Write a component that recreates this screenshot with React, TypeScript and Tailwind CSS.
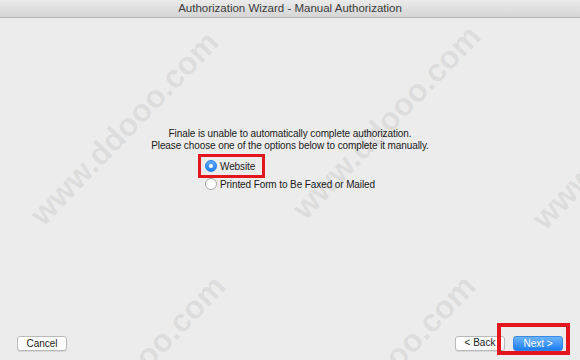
const marks = [
  { pos: "left-[124px] top-[128px]" },
  { pos: "left-[386px] top-[122px]" },
  { pos: "left-[626px] top-[132px]" },
  { pos: "left-[131px] top-[372px]" },
  { pos: "left-[381px] top-[372px]" },
];

const Radio = ({ checked }: { checked?: boolean }) =>
  checked ? (
    <span className="w-[12px] h-[12px] rounded-full bg-gradient-to-b from-[#5fadf8] to-[#1b7ef0] border border-[#2a7ee6] flex items-center justify-center">
      <span className="w-[4px] h-[4px] rounded-full bg-white" />
    </span>
  ) : (
    <span className="w-[12px] h-[12px] rounded-full bg-white border border-[#a9a9a9]" />
  );

export default function App() {
  return (
    <div
      className="relative w-[580px] h-[360px] overflow-hidden bg-[#ececec] flex flex-col text-[#1a1a1a]"
      style={{ fontFamily: '"Liberation Sans", Arial, sans-serif' }}
    >
      <div className="h-[18px] shrink-0 bg-gradient-to-b from-[#ebebeb] to-[#d5d5d5] border-b border-[#b4b4b4] flex items-center justify-center text-[11.5px] text-[#3c3c3c]">
        Authorization Wizard - Manual Authorization
      </div>

      <div className="flex-1 flex flex-col items-center pt-[110px] text-[10px] tracking-[-0.1px]">
        <p className="text-center leading-[12px]">
          Finale is unable to automatically complete authorization.
          <br />
          Please choose one of the options below to complete it manually.
        </p>
        <div className="mt-[5px] flex flex-col">
          <label className="relative h-[18px] flex items-center gap-[3px]">
            <Radio checked />
            <span>Website</span>
            <span className="absolute left-[-7px] top-[-3px] w-[67px] h-[24px] border-[3px] border-[#e4151c]" />
          </label>
          <label className="h-[18px] flex items-center gap-[3px]">
            <Radio />
            <span>Printed Form to Be Faxed or Mailed</span>
          </label>
        </div>
      </div>

      <div className="shrink-0 flex justify-between items-end px-[17px] pb-[9px] text-[10px]">
        <button className="w-[50px] h-[15px] rounded-[3px] bg-white border border-[#b9b9b9] shadow-[0_1px_0_rgba(0,0,0,0.08)] leading-none">
          Cancel
        </button>
        <div className="flex gap-[8px]">
          <button className="w-[50px] h-[15px] rounded-[3px] bg-white border border-[#b9b9b9] shadow-[0_1px_0_rgba(0,0,0,0.08)] leading-none">
            &lt; Back
          </button>
          <div className="relative">
            <button className="w-[50px] h-[15px] rounded-[3px] bg-gradient-to-b from-[#6ab4fb] to-[#1a7df1] border border-[#3a88e8] text-white leading-none">
              Next &gt;
            </button>
            <span className="absolute left-[-16px] top-[-13px] w-[73px] h-[32px] border-[4px] border-[#e4151c]" />
          </div>
        </div>
      </div>

      {marks.map((m, i) => (
        <div
          key={i}
          className={`absolute ${m.pos} -translate-x-1/2 -translate-y-1/2 -rotate-[46deg] whitespace-nowrap text-[32px] font-bold text-black/[0.075] pointer-events-none`}
        >
          www.ddooo.com
        </div>
      ))}
    </div>
  );
}
